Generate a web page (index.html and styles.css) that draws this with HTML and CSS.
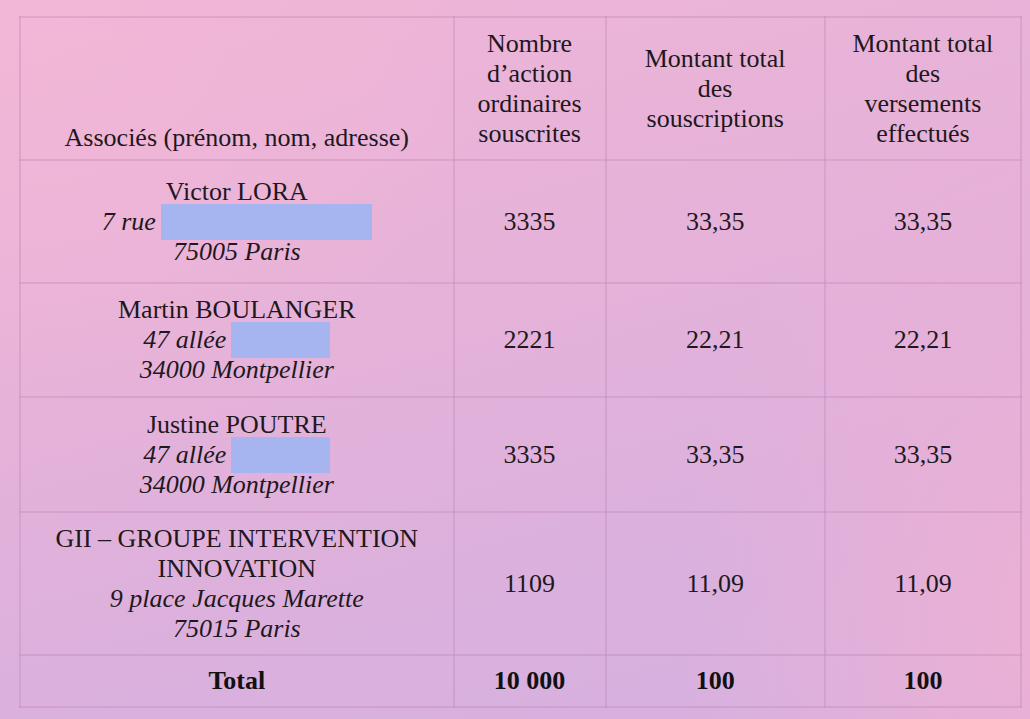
FILE: index.html
```html
<!DOCTYPE html>
<html lang="fr">
<head>
<meta charset="utf-8">
<link rel="stylesheet" href="styles.css">
</head>
<body>
<div class="page">
<table class="grid">
  <tr class="r-head">
    <td class="cell c1 bottom">Associés (prénom, nom, adresse)</td>
    <td class="cell c2">Nombre<br>d’action<br>ordinaires<br>souscrites</td>
    <td class="cell c3">Montant total<br>des<br>souscriptions</td>
    <td class="cell c4">Montant total<br>des<br>versements<br>effectués</td>
  </tr>
  <tr class="r1">
    <td class="cell">Victor LORA<br><em class="addr">7 rue<span class="redact w-long"></span></em><br><em class="addr">75005 Paris</em></td>
    <td class="cell">3335</td><td class="cell">33,35</td><td class="cell">33,35</td>
  </tr>
  <tr class="r2">
    <td class="cell">Martin BOULANGER<br><em class="addr">47 allée<span class="redact w-short"></span></em><br><em class="addr">34000 Montpellier</em></td>
    <td class="cell">2221</td><td class="cell">22,21</td><td class="cell">22,21</td>
  </tr>
  <tr class="r3">
    <td class="cell">Justine POUTRE<br><em class="addr">47 allée<span class="redact w-short"></span></em><br><em class="addr">34000 Montpellier</em></td>
    <td class="cell">3335</td><td class="cell">33,35</td><td class="cell">33,35</td>
  </tr>
  <tr class="r4">
    <td class="cell">GII – GROUPE INTERVENTION<br>INNOVATION<br><em class="addr">9 place Jacques Marette</em><br><em class="addr">75015 Paris</em></td>
    <td class="cell">1109</td><td class="cell">11,09</td><td class="cell">11,09</td>
  </tr>
  <tr class="r-total">
    <td class="cell strong">Total</td>
    <td class="cell strong">10 000</td><td class="cell strong">100</td><td class="cell strong">100</td>
  </tr>
</table>
</div>
</body>
</html>
```

FILE: styles.css
```css
body {
  margin: 0;
  font-size: 22px;
}
.page {
  height: 719px;
  box-sizing: border-box;
  padding: 16px 9px 0 19px;
  background:
    radial-gradient(ellipse 380px 560px at 1060px 620px, rgba(238,176,212,0.95), rgba(238,176,212,0) 100%),
    radial-gradient(ellipse 520px 420px at 0px 0px, rgba(243,183,214,0.9), rgba(243,183,214,0) 100%),
    linear-gradient(165deg, #efb5d7 0%, #e6b2d9 40%, #dab0de 75%, #d6b0e0 100%);
}
.grid {
  border-collapse: collapse;
  width: 1003px;
}
.c1 { width: 429px; }
.c2 { width: 149px; }
.c3 { width: 216px; }
.c4 { width: 193px; }
.cell {
  font-family: "Liberation Serif", "Times New Roman", serif;
  font-size: 26px;
  line-height: 30px;
  color: #1e1820;
  border: 2px solid rgba(196, 140, 184, 0.4);
  text-align: center;
  vertical-align: middle;
  padding: 0;
}
.bottom {
  vertical-align: bottom;
  padding-bottom: 6px;
}
.addr {
  font-family: "Liberation Serif", "Times New Roman", serif;
  font-style: italic;
}
.strong {
  font-weight: bold;
  color: #111;
}
.r-head { height: 143px; }
.r1 { height: 123px; }
.r2 { height: 114px; }
.r3 { height: 115px; }
.r4 { height: 143px; }
.r-total { height: 52px; }
.redact {
  display: inline-block;
  height: 36px;
  margin: -3px 0 -3px 5px;
  vertical-align: top;
  background: #a6b4ef;
}
.w-long { width: 211px; }
.w-short { width: 99px; }
```
